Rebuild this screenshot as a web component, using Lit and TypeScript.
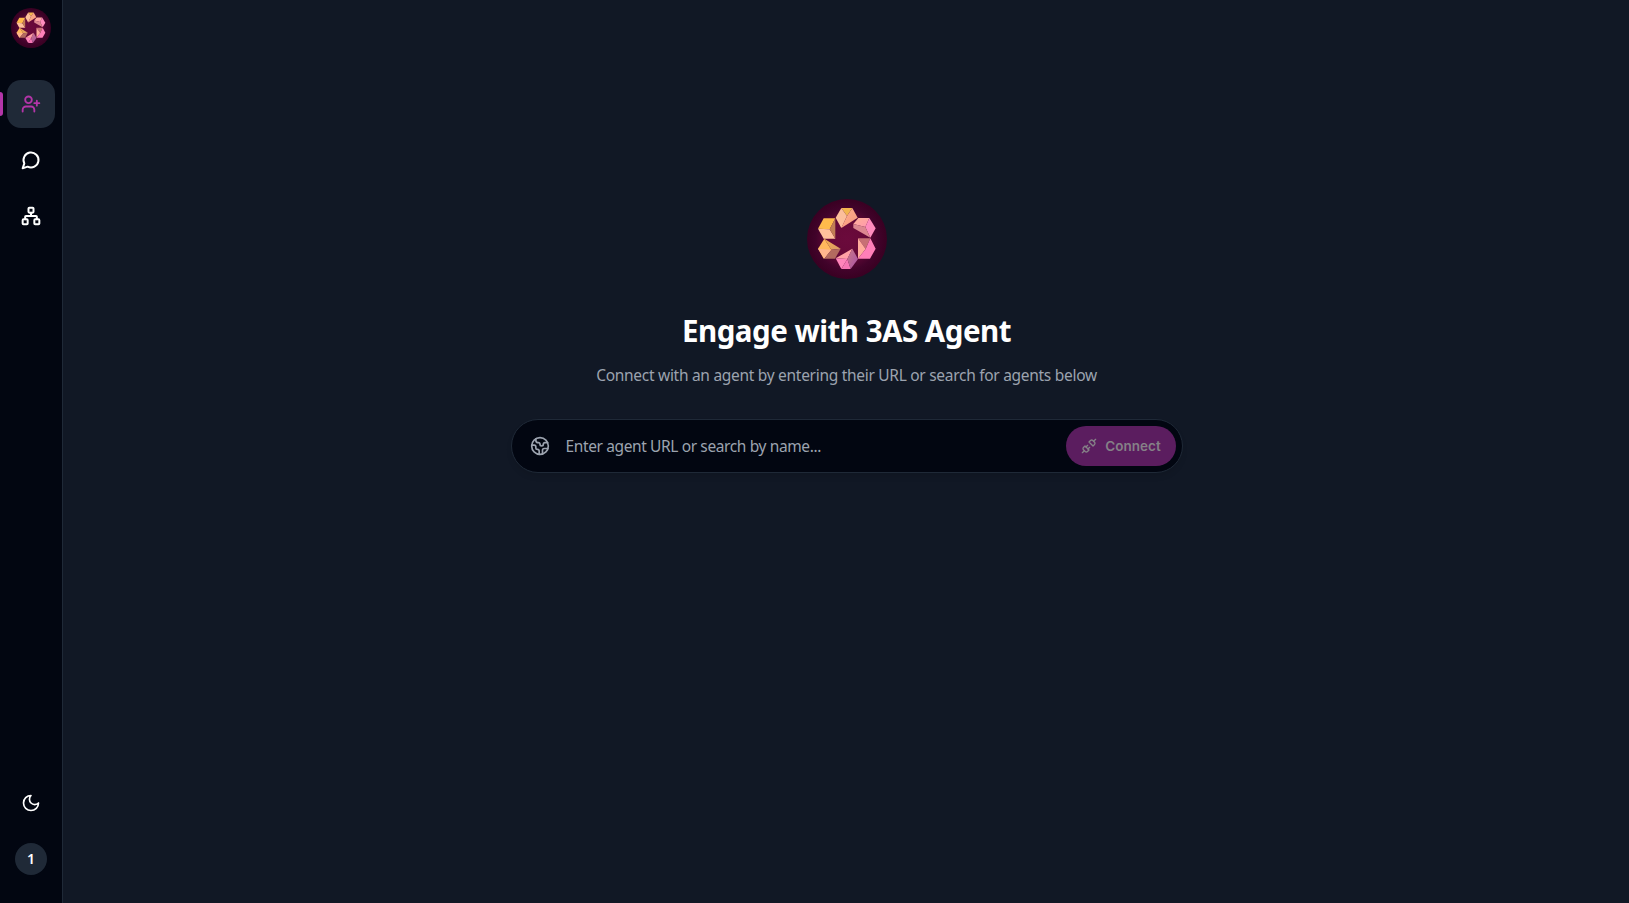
import { LitElement, html, css, svg } from "lit";
import { customElement, property } from "lit/decorators.js";

const icons: Record<string, unknown> = {
  userPlus: svg`<path d="M16 21v-2a4 4 0 0 0-4-4H6a4 4 0 0 0-4 4v2"/><circle cx="9" cy="7" r="4"/><path d="M19 8v6M22 11h-6"/>`,
  message: svg`<path d="M7.9 20A9 9 0 1 0 4 16.1L2 22Z"/>`,
  network: svg`<rect x="16" y="16" width="6" height="6" rx="1"/><rect x="2" y="16" width="6" height="6" rx="1"/><rect x="9" y="2" width="6" height="6" rx="1"/><path d="M5 16v-3a1 1 0 0 1 1-1h12a1 1 0 0 1 1 1v3M12 12V8"/>`,
  moon: svg`<path d="M12 3a6 6 0 0 0 9 9 9 9 0 1 1-9-9Z"/>`,
  earth: svg`<path d="M21.54 15H17a2 2 0 0 0-2 2v4.54"/><path d="M7 3.34V5a3 3 0 0 0 3 3 2 2 0 0 1 2 2c0 1.1.9 2 2 2a2 2 0 0 0 2-2c0-1.1.9-2 2-2h3.17"/><path d="M11 21.95V18a2 2 0 0 0-2-2 2 2 0 0 1-2-2v-1a2 2 0 0 0-2-2H2.05"/><circle cx="12" cy="12" r="10"/>`,
  unplug: svg`<path d="m19 5 3-3M2 22l3-3"/><path d="M6.3 20.3a2.4 2.4 0 0 0 3.4 0L12 18l-6-6-2.3 2.3a2.4 2.4 0 0 0 0 3.4Z"/><path d="M7.5 13.5 10 11M10.5 16.5 13 14"/><path d="m12 6 6 6 2.3-2.3a2.4 2.4 0 0 0 0-3.4l-2.6-2.6a2.4 2.4 0 0 0-3.4 0Z"/>`,
};

@customElement("line-icon")
export class LineIcon extends LitElement {
  static styles = css`
    :host { display: block; width: 20px; height: 20px; }
    svg { display: block; width: 100%; height: 100%; fill: none; stroke: currentColor; stroke-width: var(--stroke, 2); stroke-linecap: round; stroke-linejoin: round; }
  `;
  @property() name = "";
  render() {
    return html`<svg viewBox="0 0 24 24">${icons[this.name]}</svg>`;
  }
}

@customElement("brand-logo")
export class BrandLogo extends LitElement {
  static styles = css`
    :host { display: block; width: 80px; height: 80px; }
    svg { display: block; width: 100%; height: 100%; }
  `;
  render() {
    return html`<svg viewBox="22 27 240 240">
      <defs>
        <radialGradient id="disc"><stop offset="0" stop-color="#6b0a3c"/><stop offset=".45" stop-color="#660938"/><stop offset=".78" stop-color="#41032a"/><stop offset="1" stop-color="#390022"/></radialGradient>
        <linearGradient id="gold" x2="1" y2="1"><stop offset="0" stop-color="#f5b24c"/><stop offset="1" stop-color="#d99a68"/></linearGradient>
        <linearGradient id="coral" x2="1" y2="1"><stop offset="0" stop-color="#ffb08a"/><stop offset="1" stop-color="#f5987f"/></linearGradient>
        <linearGradient id="rose" x2="1" y2="1"><stop offset="0" stop-color="#ffb096"/><stop offset="1" stop-color="#ff98b0"/></linearGradient>
        <linearGradient id="mauve" x2="1" y2="1"><stop offset="0" stop-color="#c97a86"/><stop offset="1" stop-color="#a850a6"/></linearGradient>
      </defs>
      <circle cx="142" cy="147" r="120" fill="url(#disc)"/>
      <path fill="#f3b64f" d="M125 54h33l-16 24z"/>
      <path fill="#fcbf9b" d="m125 54 17 24-17 36-17-31z"/>
      <path fill="url(#coral)" d="m158 54 16 29-49 31 17-36z"/>
      <path fill="url(#rose)" d="M176 84h33l-12 27-36-9z"/>
      <path fill="#ff8cbd" d="m209 84 19 31-16 28-15-32z"/>
      <path fill="#dc8790" d="m161 102 36 9 15 32-51-29z"/>
      <path fill="#c77075" d="M175 145h37l-14 32z"/>
      <path fill="#ffac9c" d="m175 145 23 32-23 29z"/>
      <path fill="#ff7fb8" d="m212 145 16 31-17 30h-36l23-29z"/>
      <path fill="url(#rose)" d="m158 176-15 31-35-2z"/>
      <path fill="#ff85bb" d="m108 205 35 2-18 30z"/>
      <path fill="#f777b5" d="M143 207 153 237h-28z"/>
      <path fill="url(#mauve)" d="m158 176 17 31-22 30-10-30z"/>
      <path fill="#ffb95d" d="m74 146 21 33-23 27-17-30z"/>
      <path fill="url(#gold)" d="m74 146 49 30-28 3z"/>
      <path fill="#ffb68f" d="m55 176 40 3-21 27z"/>
      <path fill="#b36a5f" d="m123 176-17 30H74l21-27z"/>
      <path fill="#ffba4c" d="M72 85h35L90 118l-35-2z"/>
      <path fill="#ffc19c" d="m55 116 35 2 17 28H72z"/>
      <path fill="#c17d54" d="M107 85v61l-17-28z"/>
    </svg>`;
  }
}

@customElement("app-root")
export class AppRoot extends LitElement {
  static styles = css`
    * { box-sizing: border-box; }
    :host { display: flex; height: 100vh; background: #111825; color: #fff; font-family: "Noto Sans", sans-serif; }
    .rail { width: 63px; flex: none; border-right: 1px solid #1f2937; background: #020611; display: flex; flex-direction: column; align-items: center; padding: 8px 0 28px; }
    .small { width: 40px; height: 40px; }
    nav { display: flex; flex-direction: column; gap: 8px; margin-top: 32px; --stroke: 2.4; }
    .item { position: relative; width: 48px; height: 48px; border-radius: 14px; display: flex; align-items: center; justify-content: center; }
    .active { background: #1f2937; color: #b335a8; --stroke: 2.2; }
    .active::before { content: ""; position: absolute; left: -7px; top: 12px; width: 3px; height: 24px; border-radius: 0 4px 4px 0; background: #b335a8; }
    .foot { margin-top: auto; display: flex; flex-direction: column; align-items: center; gap: 16px; }
    .avatar { width: 32px; height: 32px; border-radius: 50%; background: #1f2937; display: grid; place-items: center; font-size: 14px; line-height: 20px; font-weight: 600; }
    main { flex: 1; display: flex; flex-direction: column; align-items: center; padding: 199px 0 0 1px; }
    h1 { margin: 32px 0 0; font-size: 29.5px; line-height: 40px; font-weight: 700; letter-spacing: -0.5px; white-space: nowrap; }
    p { margin: 12px 0 0; font-size: 15.5px; line-height: 24px; letter-spacing: -0.29px; color: #9ca3af; white-space: nowrap; }
    .search { margin-top: 32px; width: 672px; height: 54px; border: 1px solid #1f2937; border-radius: 27px; background: #020611; display: flex; align-items: center; padding: 0 6px 0 18px; color: #9ca3af; box-shadow: 0 4px 6px -1px rgba(0,0,0,.1); }
    .hint { flex: 1; margin-left: 16px; font-size: 15.5px; line-height: 24px; letter-spacing: -0.38px; }
    .connect { width: 110px; height: 40px; border: 0; padding: 0 0 0 1px; border-radius: 20px; background: #5b1d5f; color: #858087; display: flex; align-items: center; justify-content: center; gap: 8px; font: 600 13.5px/20px "Inter", sans-serif; }
    .plug { width: 16px; height: 16px; }
  `;
  render() {
    return html`
      <aside class="rail">
        <brand-logo class="small"></brand-logo>
        <nav>
          <div class="item active"><line-icon name="userPlus"></line-icon></div>
          <div class="item"><line-icon name="message"></line-icon></div>
          <div class="item"><line-icon name="network"></line-icon></div>
        </nav>
        <div class="foot">
          <div class="item"><line-icon name="moon"></line-icon></div>
          <div class="avatar">1</div>
        </div>
      </aside>
      <main>
        <brand-logo></brand-logo>
        <h1>Engage with 3AS Agent</h1>
        <p>Connect with an agent by entering their URL or search for agents below</p>
        <div class="search">
          <line-icon name="earth"></line-icon>
          <span class="hint">Enter agent URL or search by name...</span>
          <button class="connect" disabled><line-icon class="plug" name="unplug"></line-icon><span>Connect</span></button>
        </div>
      </main>`;
  }
}
